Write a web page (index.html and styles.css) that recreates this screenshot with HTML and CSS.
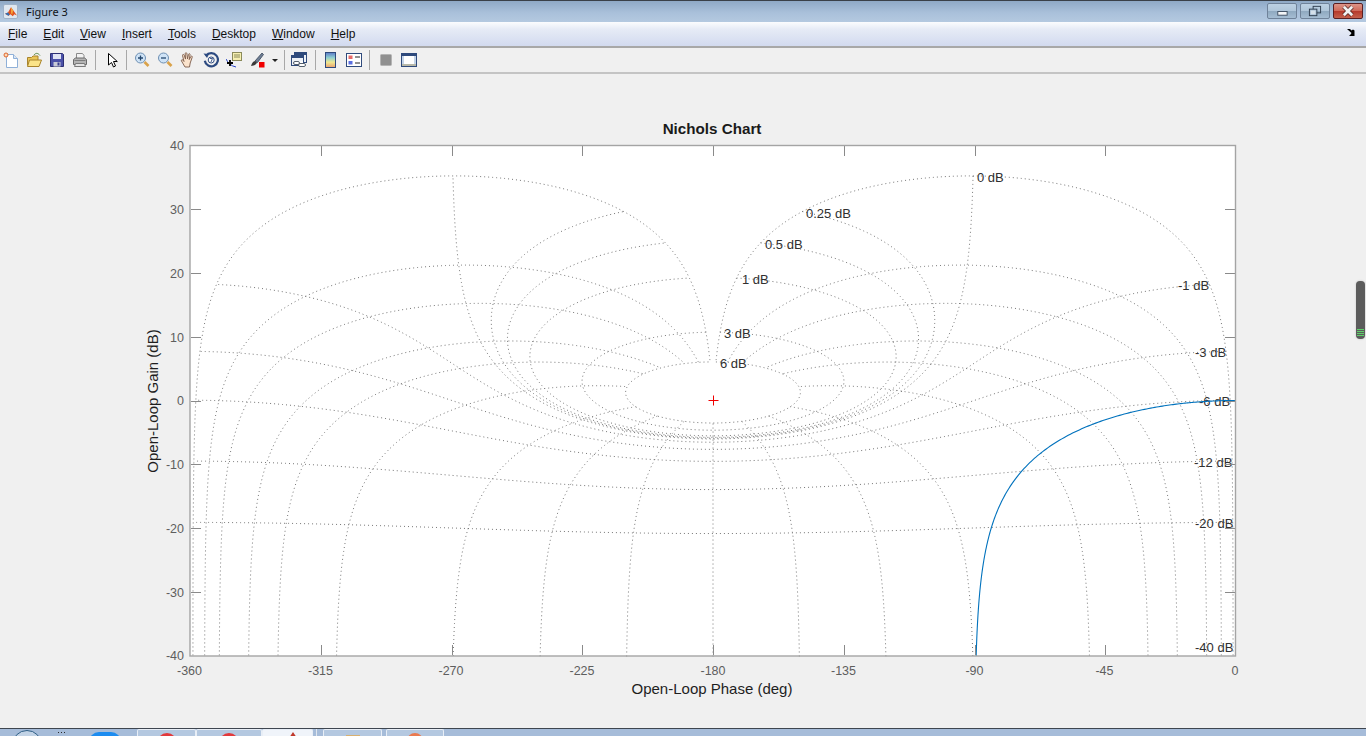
FILE: index.html
```html
<!DOCTYPE html>
<html lang="en">
<head>
<meta charset="utf-8">
<title>Figure 3</title>
<link rel="stylesheet" href="styles.css">
</head>
<body>
<div class="window">
  <header class="titlebar">
    <span class="app-frame"><svg class="app-icon" viewBox="0 0 14 14"><path d="M0 9l3.500-1.500L7 1.500l2.500 3.500 4.500 6-3-1.500-2 2.500-2.500-2.500L4 11.500z" fill="#e0521f"/><path d="M0 9l3.500-1.500L5.500 10 4 11.500z" fill="#2f6fb5"/><path d="M7 1.500l2.500 3.500-1 5-1.500-1.500z" fill="#f3a33a"/></svg></span>
    <span class="title-text">Figure 3</span>
    <div class="win-controls">
      <button class="win-btn"><svg viewBox="0 0 29 15"><rect x="10" y="8" width="10" height="4" fill="#f4f6f8" stroke="#3d4d60"/></svg></button>
      <button class="win-btn"><svg viewBox="0 0 29 15"><rect x="12.500" y="2.500" width="8" height="7" fill="none" stroke="#2e3c4e"/><rect x="8.500" y="5.500" width="8" height="7" fill="#a9c0d6" stroke="#2e3c4e"/><rect x="10" y="7" width="5" height="4" fill="#d5e0ea"/></svg></button>
      <button class="win-btn win-close"><svg viewBox="0 0 29 15"><path d="M10 3l9 9M19 3l-9 9" stroke="#4a1c18" stroke-width="4.400"/><path d="M10 3l9 9M19 3l-9 9" stroke="#f2f2f2" stroke-width="3"/></svg></button>
    </div>
  </header>

  <nav class="menubar">
    <span class="menu-item"><u>F</u>ile</span>
    <span class="menu-item"><u>E</u>dit</span>
    <span class="menu-item"><u>V</u>iew</span>
    <span class="menu-item"><u>I</u>nsert</span>
    <span class="menu-item"><u>T</u>ools</span>
    <span class="menu-item"><u>D</u>esktop</span>
    <span class="menu-item"><u>W</u>indow</span>
    <span class="menu-item"><u>H</u>elp</span>
    <svg class="dock-arrow" viewBox="0 0 9 8"><path d="M0 0h3l1.500 1.500 1.500-1 1.500 1V7H2l1.500-1.500L4.500 4z" fill="#000"/></svg>
  </nav>

  <div class="toolbar">
    <svg class="ico" viewBox="0 0 16 16"><path d="M3.500 2.500h7l4 4v9h-11z" fill="#fff" stroke="#8fb0d8"/><path d="M10.500 2.500v4h4" fill="#dce6f2" stroke="#8fb0d8"/><circle cx="3" cy="3" r="2" fill="#fbd8b8" stroke="#e0662a"/></svg>
    <svg class="ico" viewBox="0 0 16 16"><path d="M1.500 13.500v-8h4l1.500-1.500h5v4" fill="#e9c558" stroke="#a9842c"/><path d="M1.500 14.500l2-6.500h12l-2.500 6.500z" fill="#fbe489" stroke="#a9842c"/><path d="M8 3c2-2.500 4-2 6 .5" fill="none" stroke="#5a8a4a"/></svg>
    <svg class="ico" viewBox="0 0 16 16"><path d="M1.500 1.500h12l1 1v12h-13z" fill="#4b51a8" stroke="#2c2f73"/><rect x="4" y="2" width="8" height="5" fill="#dfe3f3"/><rect x="4.500" y="10" width="7" height="4.500" fill="#c9cbd6"/><rect x="8.500" y="10.500" width="2" height="3" fill="#3b3f8e"/></svg>
    <svg class="ico" viewBox="0 0 16 16"><path d="M4.500 1.500h6l1.500 2v3h-7.500z" fill="#f3f3f3" stroke="#8a8a8a"/><path d="M1.500 7.500l2-1.500h9l2 1.500v5h-13z" fill="#b4b4b4" stroke="#6a6a6a"/><path d="M3.500 11.500h9l1 3h-11z" fill="#e4e4e4" stroke="#7a7a7a"/><rect x="2.500" y="8" width="11" height="1" fill="#7d7d7d"/></svg>
    <span class="sep"></span>
    <svg class="ico" viewBox="0 0 16 16"><path d="M4.500 1.500v11.500l3-2.500 2 4.500 2-1-2-4.500h3.800z" fill="#fff" stroke="#000"/></svg>
    <span class="sep sep-b"></span>
    <svg class="ico" viewBox="0 0 16 16"><circle cx="6.500" cy="6" r="5" fill="#cfe3f6" stroke="#6d8fb3"/><path d="M4 6h5M6.500 3.500v5" stroke="#24486f" stroke-width="1.300"/><path d="M10.500 10l4 4" stroke="#d9a24a" stroke-width="2.600"/></svg>
    <svg class="ico" viewBox="0 0 16 16"><circle cx="6.500" cy="6" r="5" fill="#cfe3f6" stroke="#6d8fb3"/><path d="M4 6h5" stroke="#24486f" stroke-width="1.300"/><path d="M10.500 10l4 4" stroke="#d9a24a" stroke-width="2.600"/></svg>
    <svg class="ico" viewBox="0 0 16 16"><path d="M5 15l-3.500-6c-.6-1.200.8-1.800 1.500-.8l1 1.300-1.500-6c-.2-1.200 1.300-1.500 1.700-.4l1.300 4-.3-5.500c0-1.200 1.600-1.200 1.700 0l.6 5.300 1-4.500c.3-1.100 1.800-.8 1.600.4l-.9 4.800 1.600-3c.6-1 1.900-.4 1.400.7l-2 5.700-.7 4z" fill="#fbe3cc" stroke="#7a5a48" stroke-width=".9"/></svg>
    <svg class="ico" viewBox="0 0 16 16"><path d="M3 3.800a6.600 6.600 0 1 1-1.200 5" fill="none" stroke="#2c4a80" stroke-width="2.200"/><path d="M.5 1.500l5.500.5-2 4z" fill="#2c4a80"/><circle cx="8.200" cy="8" r="3" fill="#fff" stroke="#2c4a80"/><path d="M7 6.500h2.500L8 10" fill="none" stroke="#2c4a80" stroke-width=".9"/></svg>
    <svg class="ico" viewBox="0 0 16 16"><rect x="6.500" y="0.500" width="9" height="8" fill="#f6efb0" stroke="#8a8a5a"/><path d="M8 3h6M8 5h6" stroke="#8a8a5a"/><path d="M0 7c2 4 5 7 10 8" fill="none" stroke="#2340c8"/><path d="M1 11h6M4 8v6" stroke="#000" stroke-width="1.800"/></svg>
    <svg class="ico" viewBox="0 0 16 16"><path d="M6 9l7-8 1.500 1.500-6 8z" fill="#6f7f95" stroke="#3a4658" stroke-width=".8"/><path d="M6 9c-2 .5-3 2-4 5 2 0 5-1 6-3.500z" fill="#3a3a3a"/><rect x="10" y="10" width="5.500" height="5.500" fill="#f00000"/></svg>
    <svg class="ico-drop" viewBox="0 0 6 3"><path d="M0 0h6L3 3z" fill="#222"/></svg>
    <span class="sep sep-c"></span>
    <svg class="ico" viewBox="0 0 16 16"><rect x="3.500" y="0.500" width="12" height="10" fill="#eef2f8" stroke="#2f4a7c"/><rect x="4" y="1" width="11" height="2" fill="#2f4a7c"/><rect x="0.500" y="3.500" width="12" height="10" fill="#eef2f8" stroke="#2f4a7c"/><rect x="1" y="4" width="11" height="2" fill="#2f4a7c"/><path d="M4 11h8M8 13h7" stroke="#fff" stroke-width="3"/><rect x="2.500" y="9.500" width="6" height="3" rx="1.500" fill="none" stroke="#55606e"/><rect x="7.500" y="11.500" width="7" height="3" rx="1.500" fill="none" stroke="#55606e"/></svg>
    <span class="sep sep-d"></span>
    <svg class="ico" viewBox="0 0 16 16"><defs><linearGradient id="cbar" x1="0" y1="0" x2="0" y2="1"><stop offset="0" stop-color="#5a78c8"/><stop offset=".35" stop-color="#8fd0d0"/><stop offset=".65" stop-color="#f0e890"/><stop offset="1" stop-color="#e8a070"/></linearGradient></defs><rect x="2.500" y="0.500" width="10" height="15" fill="url(#cbar)" stroke="#2f4a7c"/></svg>
    <svg class="ico" viewBox="0 0 16 16"><rect x="0.500" y="1.500" width="15" height="13" fill="#fff" stroke="#2f4a7c"/><rect x="2.500" y="3.500" width="4" height="3.500" fill="#e86a6a"/><rect x="2.500" y="9" width="4" height="3.500" fill="#5a6ee0"/><path d="M9 5h5M9 11h5" stroke="#222"/></svg>
    <span class="sep"></span>
    <svg class="ico" viewBox="0 0 16 16"><rect x="2.500" y="2.500" width="11" height="11" rx="1" fill="#909090" stroke="#b4b4b4"/></svg>
    <svg class="ico" viewBox="0 0 16 16"><rect x="0.500" y="1.500" width="15" height="13" fill="#c4d4e8" stroke="#2f4a7c"/><rect x="1" y="2" width="14" height="2" fill="#2f4a7c"/><rect x="3" y="4" width="10" height="8" fill="#fff"/><rect x="1" y="12" width="14" height="2" fill="#b8b8a8"/></svg>
  </div>

  <main class="figure">
    <svg class="chart" viewBox="0 74 1366 654" aria-label="Nichols Chart">
      <rect class="plot-bg" x="190" y="145" width="1046" height="511"/>
      <g id="grid"></g>
      <g class="c-labels">
        <text x="977" y="182">0 dB</text>
        <text x="806" y="218">0.25 dB</text>
        <text x="765" y="249">0.5 dB</text>
        <text x="742" y="284">1 dB</text>
        <text x="724" y="338">3 dB</text>
        <text x="720" y="368">6 dB</text>
        <text x="1178" y="290">-1 dB</text>
        <text x="1195" y="357">-3 dB</text>
        <text x="1199" y="406">-6 dB</text>
        <text x="1194" y="467">-12 dB</text>
        <text x="1195" y="528">-20 dB</text>
        <text x="1195" y="652">-40 dB</text>
      </g>
      <path id="response" class="response"/>
      <path class="marker" d="M708.500 400.500h10M713.500 395.500v10"/>
      <path id="ticks" class="ticks"/>
      <rect class="axes-box" x="190" y="145.500" width="1045.500" height="510.500"/>
      <g class="tick-x">
        <text x="189.500" y="675">-360</text>
        <text x="320.500" y="675">-315</text>
        <text x="451" y="675">-270</text>
        <text x="582" y="675">-225</text>
        <text x="713" y="675">-180</text>
        <text x="843.500" y="675">-135</text>
        <text x="974.500" y="675">-90</text>
        <text x="1104.500" y="675">-45</text>
        <text x="1235" y="675">0</text>
      </g>
      <g class="tick-y">
        <text x="184" y="150">40</text>
        <text x="184" y="214">30</text>
        <text x="184" y="278">20</text>
        <text x="184" y="342">10</text>
        <text x="184" y="405">0</text>
        <text x="184" y="469">-10</text>
        <text x="184" y="533">-20</text>
        <text x="184" y="597">-30</text>
        <text x="184" y="660">-40</text>
      </g>
      <text class="chart-title" x="712" y="134">Nichols Chart</text>
      <text class="axis-label" x="712" y="694">Open-Loop Phase (deg)</text>
      <text class="axis-label" transform="translate(158 401) rotate(-90)">Open-Loop Gain (dB)</text>
    </svg>
    <div class="scroll-thumb"><span class="grip"></span></div>
  </main>

  <footer class="taskbar">
    <span class="orb"></span>
    <span class="tray-dots"></span>
    <span class="blue-pill"></span>
    <span class="task task-1"><i class="dot dot-red"></i></span>
    <span class="task task-2"><i class="dot dot-red"></i></span>
    <span class="task task-3 task-active"><i class="dot dot-tip"></i></span>
    <span class="task-gap"></span>
    <span class="task task-4"><i class="dot dot-folder"></i></span>
    <span class="task task-5"><i class="dot dot-orange"></i></span>
  </footer>
</div>
<script src="chart.js"></script>
</body>
</html>
```
FILE: styles.css
```css
* { box-sizing: border-box; }
html, body { margin: 0; height: 100%; overflow: hidden; }
body { font-family: "Noto Sans", "Liberation Sans", sans-serif; background: #f0f0f0; }

.window { display: flex; flex-direction: column; width: 1366px; height: 736px; }

.titlebar {
  flex: 0 0 22px; display: flex; align-items: center; padding: 0 3px 0 3px;
  border-top: 1px solid #3a4048;
  background: linear-gradient(180deg, #8fa9c6 0%, #a9c0da 55%, #b4c9e0 100%);
}
.app-frame { flex: none; width: 15px; height: 15px; padding: 1px 0 0 1px; background: #dfe7f0; border: 1px solid #9fb2c8; border-radius: 2px; display: flex; }
.app-icon { width: 12px; height: 12px; display: block; }
.title-text { margin-left: 8px; font-size: 11px; color: #101418; }
.win-controls { margin-left: auto; display: flex; gap: 3px; align-self: flex-start; padding-top: 2px; }
.win-btn {
  width: 30px; height: 16px; padding: 0; border: 1px solid #6f8299; border-radius: 2px;
  background: linear-gradient(180deg, #bcd0e3 0%, #b0c6da 48%, #8fa9c0 52%, #a5bdd3 100%);
  display: block;
}
.win-btn svg { display: block; width: 28px; height: 14px; }
.win-close { border-color: #5a1f22; background: linear-gradient(180deg, #dc9488 0%, #cf6a5a 48%, #b63a2c 52%, #c4604c 100%); }

.menubar {
  flex: 0 0 26px; display: flex; align-items: center; gap: 16px; padding: 1px 9px 1px 8px;
  font-family: "Liberation Sans", Arial, sans-serif; font-size: 12px; color: #111;
  background: linear-gradient(180deg, #fbfcfe 0%, #e6ebf6 30%, #d2daef 100%);
  border-bottom: 2px solid #a8a8a8;
}
.menu-item { white-space: nowrap; }
.dock-arrow { width: 9px; height: 8px; margin-left: auto; margin-right: 1px; margin-bottom: 3px; }

.toolbar {
  flex: 0 0 26px; display: flex; align-items: center; padding: 0 0 1px 3px;
  background: #f0f0f0; border-bottom: 2px solid #c4c4c4;
}
.ico { width: 16px; height: 16px; flex: none; margin-right: 7px; }
.ico-drop { width: 6px; height: 3px; flex: none; margin: 1px 6px 0 0; }
.sep { width: 1px; height: 20px; background: #a8a8a8; flex: none; margin-right: 8px; }
.sep-b { margin-left: -1px; margin-right: 7px; }
.sep-c { margin-right: 6px; }
.sep-d { margin-left: 1px; margin-right: 7px; }

.figure { flex: 1 1 auto; position: relative; min-height: 0; background: #f0f0f0; overflow: hidden; }
.chart { display: block; width: 1366px; height: 654px; font-family: "Liberation Sans", Arial, sans-serif; }
.plot-bg { fill: #fff; }
.axes-box { fill: none; stroke: #a4a4a4; stroke-width: 1.400; }
.ticks { fill: none; stroke: #8a8a8a; stroke-width: 1; }
.grid-line { fill: none; stroke: #666; stroke-width: .9; stroke-dasharray: 1 3; }
.response { fill: none; stroke: #0072bd; stroke-width: 1.100; }
.marker { fill: none; stroke: #f00000; stroke-width: 1; }
.c-labels text { font-size: 13px; fill: #303030; }
.tick-x text { font-size: 12.500px; fill: #5e5e5e; text-anchor: middle; }
.tick-y text { font-size: 12.500px; fill: #5e5e5e; text-anchor: end; }
.chart-title { font-size: 15.200px; font-weight: bold; fill: #1a1a1a; text-anchor: middle; }
.axis-label { font-size: 15px; fill: #1e1e1e; text-anchor: middle; }

.scroll-thumb {
  position: absolute; left: 1356px; top: 207px; width: 9px; height: 58px;
  background: #5c5c5c; border-radius: 4px; box-shadow: 0 0 2px #bdbdbd;
}
.grip {
  position: absolute; left: 1px; right: 1px; bottom: 2px; height: 8px;
  background: repeating-linear-gradient(180deg, #5ed06a 0 1px, #5c5c5c 1px 2px);
}

.taskbar {
  flex: 0 0 8px; display: flex; align-items: flex-start; overflow: hidden;
  background: #a6bcd9; border-top: 1px solid #3e4650; position: relative;
}
.orb { flex: none; width: 30px; height: 30px; margin: 1px 0 0 12px; border-radius: 50%; background: #c2d3e6; border: 1px solid #2f5f86; }
.tray-dots { flex: none; width: 8px; height: 1px; margin: 3px 0 0 16px; background: repeating-linear-gradient(90deg, #2a2a2a 0 1px, #a6bcd9 1px 3px); }
.blue-pill { flex: none; width: 32px; height: 20px; margin: 3px 0 0 23px; border-radius: 12px; background: #1c8cf0; }
.task { flex: none; height: 8px; display: flex; justify-content: center; border: 1px solid #e8eef6; border-bottom: 0; border-radius: 2px 2px 0 0; background: #b4c8e0; }
.task-1 { width: 59px; margin-left: 16px; }
.task-2 { width: 66px; }
.task-3 { width: 51px; padding-left: 10px; }
.task-4 { width: 59px; }
.task-5 { width: 58px; margin-left: 4px; }
.task-active { background: #f0f4fa; }
.task-gap { flex: none; width: 10px; height: 8px; margin-left: 3px; margin-right: -3px; border-left: 1px solid #e0e6ee; border-right: 0; }
.dot { display: block; width: 20px; height: 20px; border-radius: 50%; margin-top: 3px; }
.dot-red { background: #e2393c; }
.dot-tip { width: 0; height: 0; margin-top: 2px; border: 4px solid transparent; border-bottom: 6px solid #c0392b; border-top: 0; }
.dot-folder { background: #d8b070; border-radius: 0; width: 14px; margin-top: 5px; }
.dot-orange { background: #ea7a50; width: 16px; height: 16px; }
```
FILE: chart.js
```js
// Nichols grid: closed-loop T = m e^{j phi} mapped to open-loop G = T / (1 - T).
(function () {
  var NS = 'http://www.w3.org/2000/svg';
  var X = function (deg) { return 1236 + deg * (1046 / 360); };
  var Y = function (db) { return 400.5 - db * (511 / 80); };
  var MDB = [6, 3, 1, 0.5, 0.25, 0, -1, -3, -6, -12, -20, -40];
  var PHI = [1, 5, 10, 20, 30, 50, 90, 120, 150, 180, 210, 240, 270, 310, 330, 340, 350, 355, 359];

  function point(m, phiDeg) {
    var p = -phiDeg * Math.PI / 180;
    var tr = m * Math.cos(p), ti = m * Math.sin(p);
    var re = 1 - tr, im = -ti;
    var gain = 20 * Math.log10(m / Math.hypot(re, im));
    var phase = -phiDeg - Math.atan2(im, re) * 180 / Math.PI;
    return X(phase).toFixed(2) + ' ' + Y(gain).toFixed(2);
  }
  function poly(points) { return 'M' + points.join('L'); }

  var grid = document.getElementById('grid');
  function add(d) {
    var el = document.createElementNS(NS, 'path');
    el.setAttribute('class', 'grid-line');
    el.setAttribute('d', d);
    grid.appendChild(el);
  }

  // Closed-loop phase samples: log-spaced from both ends, so the steep
  // parts of the contours near 1 and 359 degrees stay smooth.
  var angles = [];
  var N = 200, j;
  for (j = 0; j <= N; j++) angles.push(Math.pow(180, j / N));
  for (j = N - 1; j >= 0; j--) angles.push(360 - Math.pow(180, j / N));

  MDB.forEach(function (db) {
    if (db < -20) return;
    var m = Math.pow(10, db / 20);
    add(poly(angles.map(function (a) { return point(m, a); })));
  });

  // Closed-loop gain samples: densest around 0 dB, where the phase contours
  // sweep across the chart fastest.
  var gains = [];
  var M = 300, s;
  for (j = M; j > 0; j--) { s = j / M; gains.push(-40 * s * s * s * s); }
  gains.push(0);
  for (j = 1; j <= M; j++) { s = j / M; gains.push(6 * s * s * s * s); }

  PHI.forEach(function (phi) {
    add(poly(gains.map(function (db) { return point(Math.pow(10, db / 20), phi); })));
  });

  // First-order response 1 / (s + 1)
  var r = [];
  for (var k = 0; k <= 400; k++) {
    var w = Math.pow(10, -3 + 5 * k / 400);
    r.push(X(-Math.atan(w) * 180 / Math.PI).toFixed(2) + ' ' + Y(-10 * Math.log10(1 + w * w)).toFixed(2));
  }
  document.getElementById('response').setAttribute('d', poly(r));

  // Axis ticks, inward on all four sides
  var t = '';
  for (var i = 1; i < 8; i++) {
    var x = Math.round(190 + i * 130.75) + 0.5;
    t += 'M' + x + ' 146v10M' + x + ' 655v-10';
    var y = Math.round(145 + i * 63.875) + 0.5;
    t += 'M191 ' + y + 'h10M1235 ' + y + 'h-10';
  }
  document.getElementById('ticks').setAttribute('d', t);
})();
```
